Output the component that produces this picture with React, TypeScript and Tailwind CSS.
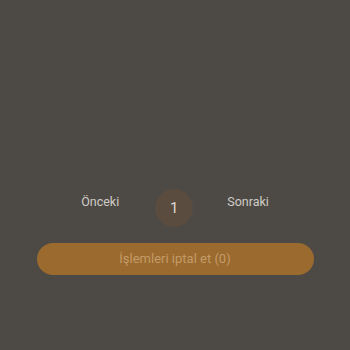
import React from "react";

export default function App() {
  return (
    <div
      className="w-[350px] h-[350px] bg-[#4d4a45] flex flex-col items-center pt-[189px]"
      style={{ fontFamily: "Roboto, 'Noto Sans', sans-serif" }}
    >
      {/* pagination */}
      <div className="flex items-start">
        <button className="mt-[4px] leading-[18px] text-[12.5px] text-[#cfcbc5]">Önceki</button>
        <div className="ml-[36px] mr-[34px] w-[38px] h-[38px] rounded-full bg-[#5a4d40] flex items-center justify-center text-[15px] text-[#ddd8d0]">
          1
        </div>
        <button className="mt-[4px] leading-[18px] text-[12.5px] text-[#cfcbc5]">Sonraki</button>
      </div>

      {/* cancel all */}
      <button className="mt-[16px] w-[277px] h-[32px] rounded-full bg-[#9a6a2e] text-[13px] text-[#c49b68]">
        İşlemleri iptal et (0)
      </button>
    </div>
  );
}
